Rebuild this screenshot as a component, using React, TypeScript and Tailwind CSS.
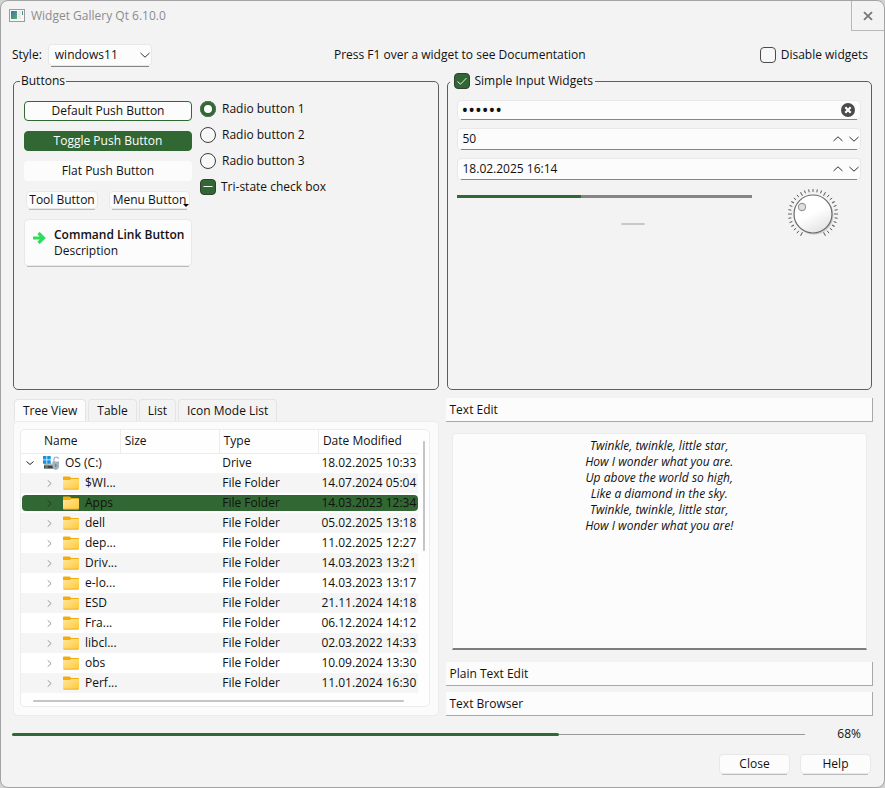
import { useState, type ReactNode } from "react";

const raised = "rounded-[4px] border border-[#e8e8e8] bg-[#fcfcfc]";

function Underline({ color }: { color: string }) {
  return <span aria-hidden="true" className={`pointer-events-none absolute inset-x-[3px] -bottom-px h-px ${color}`} />;
}

function PushButton({ className, children }: { className: string; children: ReactNode }) {
  return (
    <span className="relative flex">
      <button type="button" className={`${raised} ${className}`}>
        {children}
      </button>
      <Underline color="bg-[#bcbcbc]" />
    </span>
  );
}

function Radio({ label, defaultChecked }: { label: string; defaultChecked?: boolean }) {
  return (
    <label className="flex h-4 items-center gap-[6px]">
      <input
        type="radio"
        name="radios"
        defaultChecked={defaultChecked}
        className="size-4 shrink-0 appearance-none rounded-full border border-[#3c3c3c] bg-[#f7f7f7] checked:border-[4px] checked:border-[#316732] checked:bg-white checked:outline checked:-outline-offset-1 checked:outline-[#5b6f5b]"
      />
      {label}
    </label>
  );
}

function CheckBox({ label, checked, partial }: { label: string; checked?: boolean; partial?: boolean }) {
  return (
    <label className="flex h-4 items-center gap-[5px]">
      <span className="relative size-4 shrink-0">
        <input
          type="checkbox"
          defaultChecked={checked}
          className="peer block size-4 appearance-none rounded-[4px] border border-[#4a4a4a] bg-[#f7f7f7] checked:border-[#333f33] checked:bg-[#316732]"
        />
        <svg
          viewBox="0 0 16 16"
          className="pointer-events-none absolute inset-0 hidden size-4 peer-checked:block"
          fill="none"
          stroke="#fff"
        >
          {partial ? <path d="M3.5 7.5h9" /> : <path d="M3.5 8.5l3 2.7 6-6.2" strokeWidth="0.9" />}
        </svg>
      </span>
      {label}
    </label>
  );
}

function Chevron({ d, className, stroke = "#333" }: { d: string; className: string; stroke?: string }) {
  return (
    <svg viewBox="0 0 10 10" className={className} fill="none" stroke={stroke}>
      <path d={d} />
    </svg>
  );
}

const UP = "M0.5 7L5 2.8 9.5 7";
const DOWN = "M0.5 3L5 7.2 9.5 3";
const RIGHT = "M3 1.5L6.8 5 3 8.5";
const SMALL_DOWN = "M1.5 3.5L5 6.5 8.5 3.5";

function SpinBox({ label, value }: { label: string; value: string }) {
  return (
    <div className={`relative flex h-[22px] items-center gap-[6px] pr-px pl-[5px] ${raised}`}>
      <input aria-label={label} defaultValue={value} className="min-w-0 flex-1 bg-transparent outline-none" />
      <button type="button" aria-label={`${label} up`}>
        <Chevron d={UP} className="size-[10px]" />
      </button>
      <button type="button" aria-label={`${label} down`}>
        <Chevron d={DOWN} className="size-[10px]" />
      </button>
      <Underline color="bg-[#858585]" />
    </div>
  );
}

function Dial() {
  const ticks = Array.from({ length: 31 }, (_, i) => -150 + i * 10);
  return (
    <svg viewBox="-26 -26 52 52" className="size-[52px]" role="img" aria-label="Dial">
      <defs>
        <linearGradient id="knob" x1="0.2" y1="0" x2="0.7" y2="1">
          <stop offset="0.5" stopColor="#fff" />
          <stop offset="1" stopColor="#e2e2e2" />
        </linearGradient>
      </defs>
      {ticks.map((a, i) => (
        <line
          key={a}
          x1="0"
          x2="0"
          y1={i % 6 === 0 ? -21 : -22}
          y2="-25"
          stroke="#555"
          strokeWidth="0.9"
          transform={`rotate(${a})`}
        />
      ))}
      <circle r="19.5" cx="1" cy="1.2" fill="#cfcfcf" />
      <circle r="19" fill="url(#knob)" stroke="#6a6a6a" strokeWidth="1.2" />
      <circle cx="-11" cy="-7" r="3.6" fill="#e0e0e0" stroke="#999" strokeWidth="1.2" />
    </svg>
  );
}

function Folder() {
  return (
    <svg viewBox="0 0 16 14" className="h-[14px] w-4 shrink-0">
      <defs>
        <linearGradient id="folder" x1="0" y1="0" x2="1" y2="1">
          <stop offset="0" stopColor="#ffe79b" />
          <stop offset="1" stopColor="#ffc937" />
        </linearGradient>
      </defs>
      <path d="M0 1.5C0 .8.5.5 1 .5h5.2c.5 0 .8.2 1.2.6l.9.9H15c.6 0 1 .4 1 1V8H0z" fill="#f4ac0c" />
      <path d="M0 4h7l1.2-1H16v9.500c0 .5-.4.800-.8.800H.8c-.5 0-.8-.3-.8-.8z" fill="url(#folder)" />
      <path d="M0.500 13.200h15" stroke="#e9a32a" strokeWidth=".8" />
    </svg>
  );
}

function Drive() {
  return (
    <svg viewBox="0 0 17 15" className="h-[15px] w-[17px] shrink-0">
      <path d="M1 7.5h13l1 1.5v3.5H1z" fill="#b9bec2" />
      <path d="M1 9.5h13v3H1z" fill="#3f4447" />
      <path d="M2 11h3" stroke="#2fd06a" />
      <path d="M0 0h3.500v3.500H0zM4.200 0h3.500v3.500H4.200zM0 4.200h3.500v3.500H0zM4.200 4.200h3.500v3.500H4.200z" fill="#1593e0" />
      <path d="M11 6V3a2.300 2.300 0 014.500 0" fill="none" stroke="#a5b4bf" strokeWidth="1.3" />
      <path d="M9.500 5.500h6.500v5c0 1.800-1.500 3-3.200 3.500-1.800-.5-3.300-1.700-3.300-3.500z" fill="#9fb2c0" />
      <path d="M12.800 8v3" stroke="#5f7280" />
    </svg>
  );
}

const rows = [
  ["$WI...", "14.07.2024 05:04"],
  ["Apps", "14.03.2023 12:34"],
  ["dell", "05.02.2025 13:18"],
  ["dep...", "11.02.2025 12:27"],
  ["Driv...", "14.03.2023 13:21"],
  ["e-lo...", "14.03.2023 13:17"],
  ["ESD", "21.11.2024 14:18"],
  ["Fra...", "06.12.2024 14:12"],
  ["libcl...", "02.03.2022 14:33"],
  ["obs", "10.09.2024 13:30"],
  ["Perf...", "11.01.2024 16:30"],
];

function TreeView() {
  return (
    <div className="relative rounded-[5px] border border-[#ececec] bg-[#fefefe] pr-[11px] pb-[13px]">
      <table className="w-full table-fixed border-collapse text-left">
        <thead>
          <tr className="h-[23px] border-b border-[#ececec]">
            <th scope="col" className="p-0 pl-[23px] font-normal">Name</th>
            <th scope="col" className="border-l border-[#ececec] p-0 pl-1 font-normal">Size</th>
            <th scope="col" className="border-l border-[#ececec] p-0 pl-1 font-normal">Type</th>
            <th scope="col" className="border-l border-[#ececec] p-0 pl-1 font-normal">Date Modified</th>
          </tr>
        </thead>
        <tbody>
          <tr className="h-5 bg-white">
            <td className="p-0">
              <div className="flex items-center gap-[5px] pl-1">
                <button type="button" aria-label="Collapse OS (C:)" className="mr-[3px]">
                  <Chevron d={SMALL_DOWN} className="size-[10px]" stroke="#222" />
                </button>
                <Drive />
                OS (C:)
              </div>
            </td>
            <td className="p-0" />
            <td className="p-0 pl-[3px]">Drive</td>
            <td className="p-0 pl-[3px] whitespace-nowrap">18.02.2025 10:33</td>
          </tr>
          {rows.map(([name, date], i) => {
            const bar = name === "Apps" ? "bg-[#316732]" : "";
            return (
              <tr key={name} className={`h-5 ${i % 2 ? "bg-white" : "bg-[#f5f5f5]"}`}>
                <td className="p-0">
                  <div className={`ml-px flex h-4 items-center gap-[6px] rounded-l-[4px] pl-[23px] ${bar}`}>
                    <button type="button" aria-label={`Expand ${name}`} className="mr-[3px]">
                      <Chevron d={RIGHT} className="size-[9px]" stroke={bar ? "#1d331d" : "#8a8a8a"} />
                    </button>
                    <Folder />
                    {name}
                  </div>
                </td>
                <td className="p-0">
                  <div className={`h-4 ${bar}`} />
                </td>
                <td className="p-0">
                  <div className={`h-4 pl-[3px] ${bar}`}>File Folder</div>
                </td>
                <td className="p-0">
                  <div className={`h-4 rounded-r-[4px] pl-[3px] whitespace-nowrap ${bar}`}>{date}</div>
                </td>
              </tr>
            );
          })}
        </tbody>
      </table>
      <span aria-hidden="true" className="absolute top-[11px] right-[4px] h-[110px] w-[2px] rounded-full bg-[#c4c4c4]" />
      <span aria-hidden="true" className="absolute right-[25px] bottom-[4px] left-[12px] h-[2px] rounded-full bg-[#c4c4c4]" />
    </div>
  );
}

const tabs = ["Tree View", "Table", "List", "Icon Mode List"];

function ToolHeader({ children }: { children: string }) {
  return (
    <button
      type="button"
      className="block h-6 w-full border-r border-b border-[#a8a8a8] bg-[#fcfcfc] px-1 text-left"
    >
      {children}
    </button>
  );
}

export default function App() {
  const [tab, setTab] = useState("Tree View");

  return (
    <div className="min-h-screen bg-[#d2d2d2] font-['Open_Sans',sans-serif] text-[12px] leading-4 text-[#111]">
      <div className="flex min-h-screen flex-col rounded-[8px] border border-[#a3a3a3] bg-[#f3f3f3]">
        <header className="flex h-[29px] items-center gap-[6px] pl-2 text-[#8c8c8c]">
          <svg viewBox="0 0 16 13" className="h-[13px] w-4">
            <defs>
              <linearGradient id="app" x1="0" y1="0" x2="1" y2="1">
                <stop offset="0" stopColor="#3e6fa8" />
                <stop offset="1" stopColor="#53b36e" />
              </linearGradient>
            </defs>
            <rect x=".5" y=".5" width="15" height="12" fill="#f7f7f7" stroke="#9b9b9b" />
            <rect x="2" y="2" width="6" height="8" fill="url(#app)" />
            <path d="M9 3h3M9 5h3M9 7h3M9 9h3" stroke="#dcdcdc" />
            <path d="M13.500 2v4" stroke="#4d8f8c" />
          </svg>
          <h1 className="flex-1">Widget Gallery Qt 6.10.0</h1>
          <button
            type="button"
            aria-label="Close window"
            className="flex h-[30px] w-[33px] items-center justify-center self-start border-b border-l border-[#b9b9b9]"
          >
            <svg viewBox="0 0 10 10" className="size-[10px]" fill="none" stroke="#777" strokeWidth="1.8">
              <path d="M1 1.200l8 7.600M9 1.200L1 8.800" />
            </svg>
          </button>
        </header>

        <main className="flex flex-1 flex-col px-[11px] pt-[14px]">
          <div className="flex h-[22px] items-center justify-between pr-[5px]">
            <div className="flex items-center gap-[6px]">
              <label htmlFor="style">Style:</label>
              <div className="relative flex">
                <select
                  id="style"
                  defaultValue="windows11"
                  className={`h-[22px] w-[104px] appearance-none pl-[6px] ${raised}`}
                >
                  <option>windows11</option>
                  <option>fusion</option>
                </select>
                <Chevron
                  d={DOWN}
                  className="pointer-events-none absolute top-[6px] right-[2px] size-[10px]"
                />
                <Underline color="bg-[#858585]" />
              </div>
            </div>
            <p className="pl-2">Press F1 over a widget to see Documentation</p>
            <CheckBox label="Disable widgets" />
          </div>

          <div className="grid grid-cols-2 gap-2 px-px pt-[7px]">
            <fieldset className="min-h-[317px] rounded-[5px] border border-[#5e5e5e]">
              <legend className="ml-[6px] px-px">Buttons</legend>
              <div className="flex gap-2 pt-[12px] pl-[10px]">
                <div className="flex w-[168px] flex-col gap-[10px]">
                  <button type="button" className="h-5 rounded-[4px] border border-[#316732] bg-[#fcfcfc]">
                    Default Push Button
                  </button>
                  <button
                    type="button"
                    aria-pressed="true"
                    className="h-5 rounded-[4px] border border-[#316732] bg-[#316732] text-white"
                  >
                    Toggle Push Button
                  </button>
                  <button type="button" className="h-5 rounded-[4px] bg-[#fcfcfc]">
                    Flat Push Button
                  </button>
                  <div className="flex justify-between px-[2px]">
                    <PushButton className="h-[18px] w-[72px]">Tool Button</PushButton>
                    <div className="relative flex">
                      <PushButton className="h-[18px] w-[81px]">Menu Button</PushButton>
                      <span
                        aria-hidden="true"
                        className="pointer-events-none absolute right-[1px] bottom-[2px] border-x-[3px] border-t-[3px] border-x-transparent border-t-black"
                      />
                    </div>
                  </div>
                  <PushButton className="flex h-[47px] w-full items-center gap-[8px] pl-[7px] text-left">
                    <svg
                      viewBox="0 0 14 12"
                      className="mt-[12px] h-3 w-[14px] self-start"
                      fill="none"
                      stroke="#30dc5f"
                      strokeWidth="3.200"
                    >
                      <path d="M1 6h10M6.500 1L11.500 6l-5 5" />
                    </svg>
                    <span>
                      <strong className="block font-semibold">Command Link Button</strong>
                      <span className="block">Description</span>
                    </span>
                  </PushButton>
                </div>
                <div className="flex flex-col gap-[10px]">
                  <Radio label="Radio button 1" defaultChecked />
                  <Radio label="Radio button 2" />
                  <Radio label="Radio button 3" />
                  <CheckBox label="Tri-state check box" checked partial />
                </div>
              </div>
            </fieldset>

            <fieldset className="min-h-[317px] rounded-[5px] border border-[#5e5e5e]">
              <legend className="ml-[2px] pr-[2px] pl-1">
                <CheckBox label="Simple Input Widgets" checked />
              </legend>
              <div className="flex flex-col gap-2 pt-[11px] pr-[10px] pl-[9px]">
                <div className={`relative flex h-5 items-center pr-[5px] pl-[4px] ${raised}`}>
                  <input
                    type="password"
                    aria-label="Password"
                    defaultValue="secret"
                    className="h-4 min-w-0 flex-1 bg-transparent text-[18px] leading-4 outline-none"
                  />
                  <button type="button" aria-label="Clear">
                    <svg viewBox="0 0 14 14" className="size-[14px]">
                      <circle cx="7" cy="7" r="7" fill="#4a4a4a" />
                      <path d="M4.300 4.300l5.400 5.400M9.700 4.300L4.300 9.700" stroke="#fff" strokeWidth="2.200" />
                    </svg>
                  </button>
                  <Underline color="bg-[#858585]" />
                </div>
                <SpinBox label="Value" value="50" />
                <SpinBox label="Date" value="18.02.2025 16:14" />
                <div className="flex gap-[35px]">
                  <div className="flex flex-1 flex-col pt-[7px]">
                    <input
                      type="range"
                      aria-label="Slider"
                      defaultValue="42"
                      className="h-[3px] w-full appearance-none bg-linear-to-r from-[#316732] from-42% to-[#858585] to-42% [&::-webkit-slider-thumb]:size-0 [&::-webkit-slider-thumb]:appearance-none"
                    />
                    <span aria-hidden="true" className="mt-[25px] ml-[164px] h-[2px] w-6 rounded-full bg-[#c8c8c8]" />
                  </div>
                  <div className="mr-[22px]">
                    <Dial />
                  </div>
                </div>
              </div>
            </fieldset>

            <section className="pt-px">
              <div role="tablist" className="flex items-end gap-[2px] pl-px">
                {tabs.map((name) => (
                  <button
                    key={name}
                    type="button"
                    role="tab"
                    aria-selected={tab === name}
                    onClick={() => setTab(name)}
                    className={`h-[22px] rounded-t-[4px] border border-b-0 border-[#e4e4e4] px-2 whitespace-nowrap ${
                      tab === name ? "bg-[#fcfcfc]" : "bg-[#f3f3f3]"
                    }`}
                  >
                    {name}
                  </button>
                ))}
              </div>
              <div
                role="tabpanel"
                className="rounded-[5px] border border-[#ececec] bg-[#fbfbfb] pt-[7px] pr-[8px] pb-[8px] pl-[6px]"
              >
                <TreeView />
              </div>
            </section>

            <section className="-mx-px flex flex-col gap-[6px]">
              <ToolHeader>Text Edit</ToolHeader>
              <div className="flex flex-1 flex-col px-[6px] pt-[5px] pb-[6px]">
                <div
                  role="textbox"
                  aria-label="Text Edit"
                  contentEditable
                  suppressContentEditableWarning
                  className="flex-1 rounded-t-[4px] border border-b-2 border-[#ececec] border-b-[#7d7d7d] bg-[#fcfcfc] pt-1 text-center whitespace-pre-line italic outline-none"
                >
                  {
                    "Twinkle, twinkle, little star,\nHow I wonder what you are.\nUp above the world so high,\nLike a diamond in the sky.\nTwinkle, twinkle, little star,\nHow I wonder what you are!"
                  }
                </div>
              </div>
              <ToolHeader>Plain Text Edit</ToolHeader>
              <ToolHeader>Text Browser</ToolHeader>
            </section>
          </div>

          <div className="flex items-center gap-[32px] pt-[10px] pr-3">
            <div
              role="progressbar"
              aria-label="Progress"
              aria-valuenow={68}
              aria-valuemin={0}
              aria-valuemax={100}
              className="flex flex-1 items-center"
            >
              <span className="h-[3px] w-[69%] rounded-full bg-[#316732]" />
              <span className="h-px flex-1 bg-[#9a9a9a]" />
            </div>
            <span>68%</span>
          </div>

          <div className="flex justify-end gap-[10px] pt-3 pr-[2px] pb-2">
            <PushButton className="h-5 w-[71px]">Close</PushButton>
            <PushButton className="h-5 w-[71px]">Help</PushButton>
          </div>
        </main>
      </div>
    </div>
  );
}
